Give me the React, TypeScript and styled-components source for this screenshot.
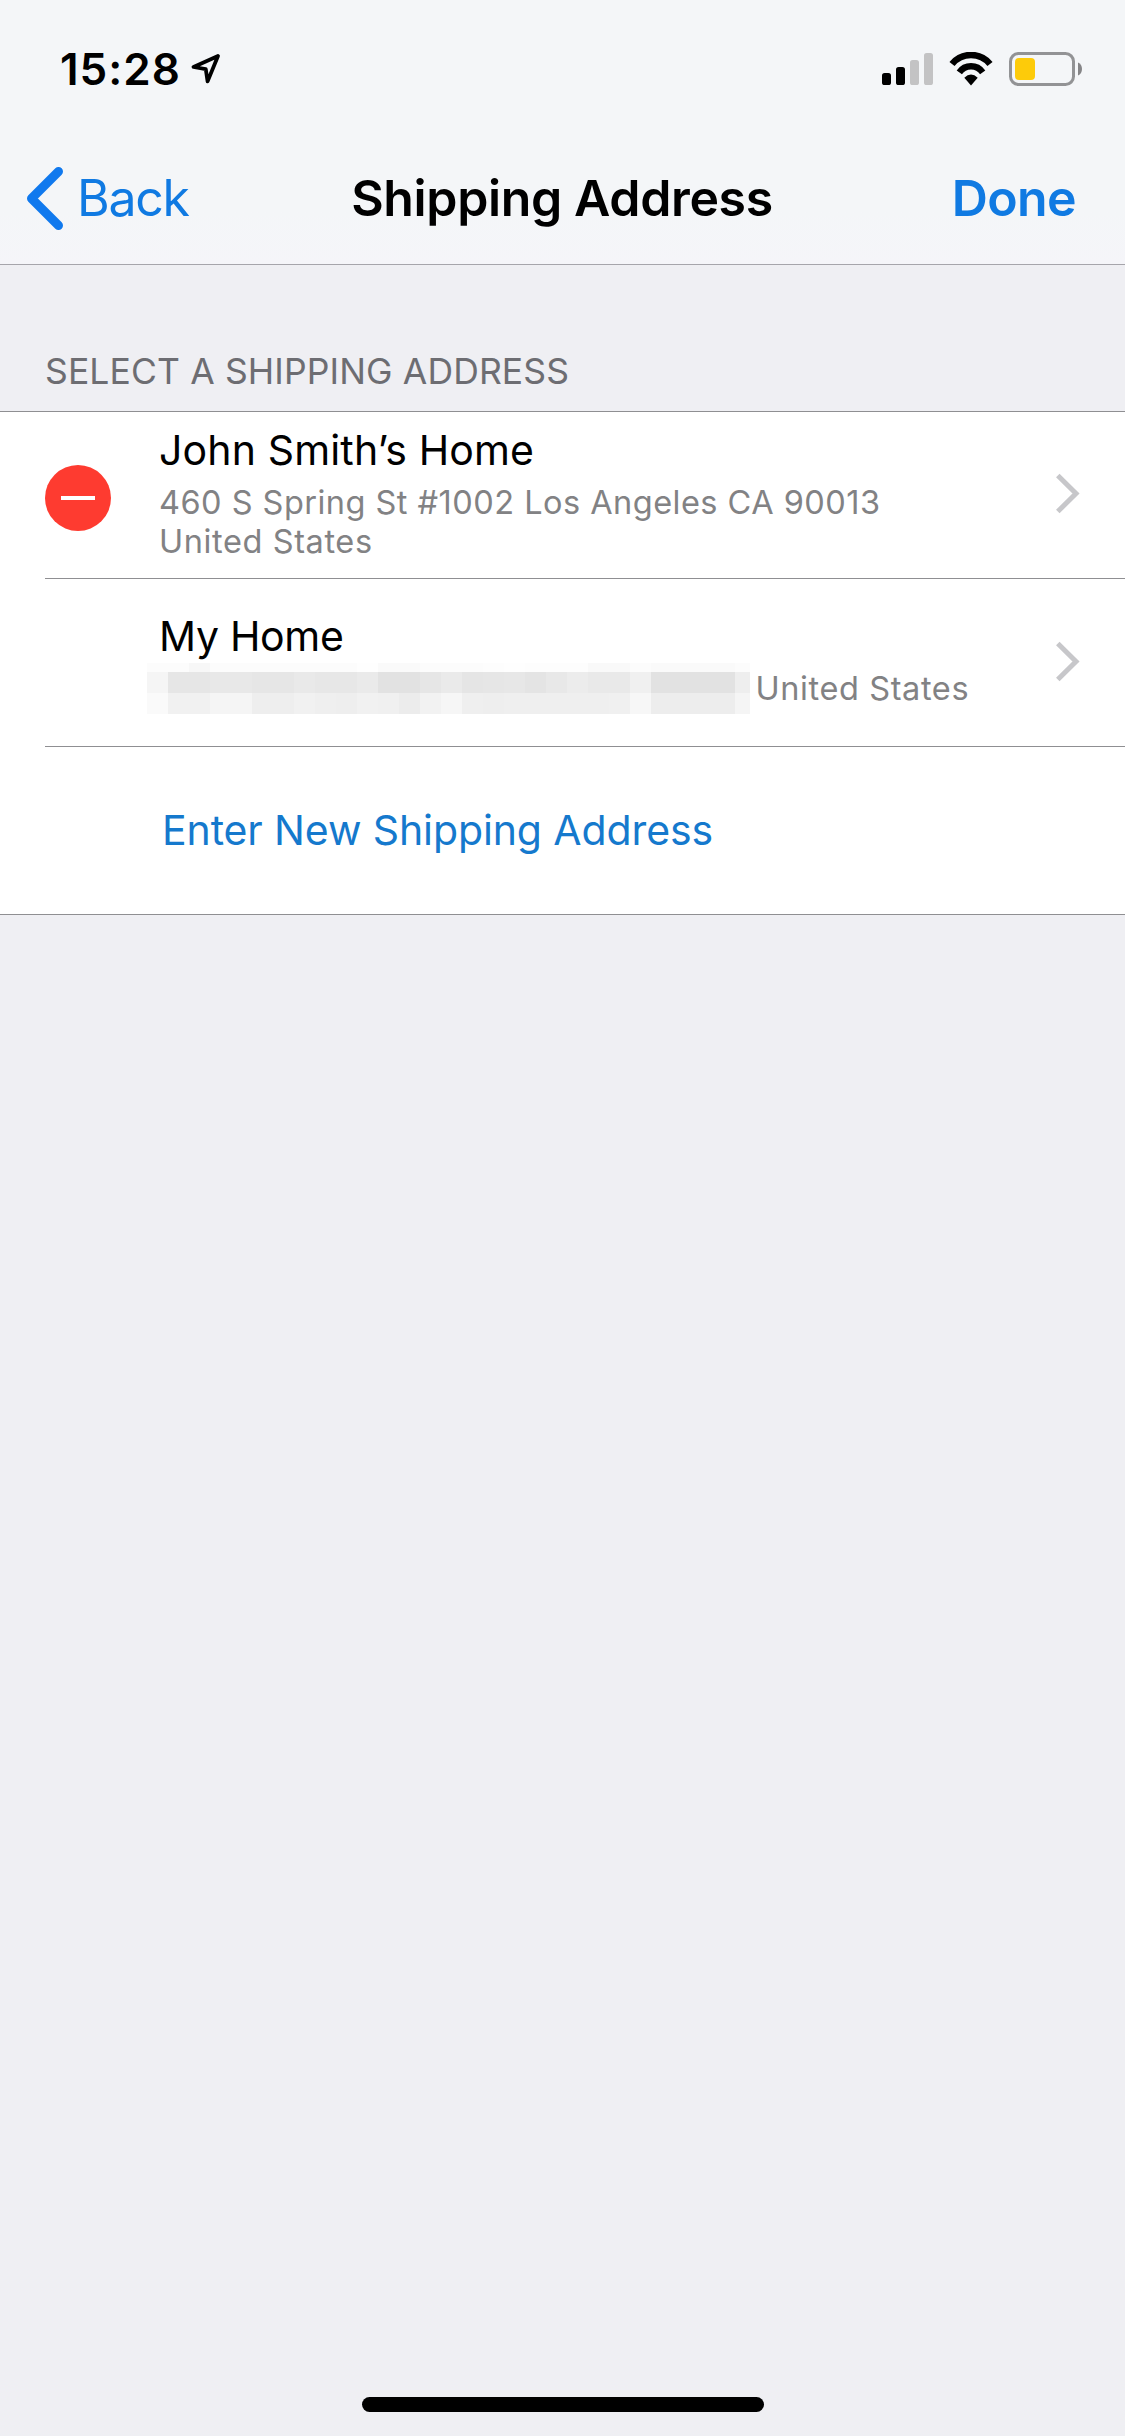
import React from 'react';
import styled, { createGlobalStyle } from 'styled-components';

const GlobalStyle = createGlobalStyle`
  *, *::before, *::after { box-sizing: border-box; }
  body {
    margin: 0;
    background: #efeff3;
    font-family: Inter, "Liberation Sans", sans-serif;
    -webkit-font-smoothing: antialiased;
  }
`;

const Screen = styled.div`
  display: flex;
  flex-direction: column;
  width: 1125px;
  height: 2436px;
  overflow: hidden;
  background: #efeff3;
`;

const TopBar = styled.header`
  background: linear-gradient(#f4f6f8 0%, #f4f6f8 80%, #f5f5f9 100%);
  border-bottom: 1px solid #a6a5ab;
`;

const StatusBar = styled.div`
  display: flex;
  align-items: center;
  height: 132px;
  padding: 6px 42px 0 60px;
`;

const Clock = styled.time`
  width: 130px;
  font-size: 44px;
  font-weight: 600;
  line-height: 54px;
  letter-spacing: 1px;
  color: #000;
`;

const StatusIcons = styled.div`
  display: flex;
  align-items: center;
  gap: 15px;
  margin-left: auto;
`;

const Icon = styled.svg`
  display: block;
  flex: none;
`;

const NavBar = styled.nav`
  display: grid;
  grid-template-columns: 1fr auto 1fr;
  align-items: center;
  height: 132px;
  padding: 0 49px 0 26px;
`;

const NavButton = styled.button<{ $bold?: boolean; $tracking: number }>`
  display: flex;
  align-items: center;
  gap: 13px;
  justify-self: ${(p) => (p.$bold ? 'end' : 'start')};
  padding: 0;
  border: 0;
  background: none;
  font: inherit;
  font-size: 50px;
  font-weight: ${(p) => (p.$bold ? 600 : 400)};
  line-height: 60px;
  letter-spacing: ${(p) => p.$tracking}px;
  color: #107ae2;
`;

const NavTitle = styled.h1`
  margin: 0 0 0 22px;
  font-size: 50px;
  font-weight: 600;
  line-height: 60px;
  letter-spacing: -0.365px;
  white-space: nowrap;
  color: #000;
`;

const SectionHeader = styled.h2`
  display: flex;
  align-items: flex-end;
  height: 146px;
  margin: 0;
  padding: 0 0 19px 45px;
  font-size: 35.5px;
  font-weight: 400;
  line-height: 40px;
  letter-spacing: 0.12px;
  color: #6d6d72;
`;

const AddressList = styled.ul`
  margin: 0;
  padding: 0 0 0 45px;
  list-style: none;
  background: #fff;
  border-top: 1px solid #8f8f92;
  border-bottom: 1px solid #8f8f92;
`;

const Row = styled.li<{ $height: number }>`
  display: flex;
  align-items: center;
  height: ${(p) => p.$height}px;
  padding-right: 45px;

  &:not(:last-child) {
    border-bottom: 1px solid #8f8f92;
  }
`;

const Lead = styled.div`
  flex: none;
  width: 114px;
`;

const RemoveButton = styled.button`
  display: flex;
  align-items: center;
  justify-content: center;
  width: 66px;
  height: 66px;
  margin: 6px 0 0;
  padding: 0;
  border: 0;
  border-radius: 50%;
  background: #fe3b30;

  &::before {
    content: '';
    width: 34px;
    height: 4px;
    background: #fff;
  }
`;

const RowText = styled.div<{ $lift: number }>`
  flex: 1;
  padding-bottom: ${(p) => p.$lift}px;
`;

const RowTitle = styled.div<{ $tracking: number }>`
  margin-bottom: 7px;
  font-size: 41px;
  line-height: 52px;
  letter-spacing: ${(p) => p.$tracking}px;
  color: #000;
`;

const DetailLine = styled.div<{ $tracking: number }>`
  display: flex;
  align-items: center;
  height: 39px;
  font-size: 32.5px;
  line-height: 39px;
  letter-spacing: ${(p) => p.$tracking}px;
  white-space: nowrap;
  color: #828284;
`;

const Mosaic = styled.div`
  display: grid;
  flex: none;
  grid-template-columns: repeat(28, 21px) 15px;
  grid-template-rows: 9px 21px 21px;
  margin: 0 5.5px 0 -12px;
`;

const Tile = styled.span<{ $shade: string }>`
  background: #${(p) => p.$shade.repeat(3)};
`;

const Disclosure = styled(Icon)`
  margin-bottom: 3px;
`;

const AddButton = styled.button`
  padding: 0 0 1px 3px;
  border: 0;
  background: none;
  font: inherit;
  font-size: 41px;
  line-height: 52px;
  letter-spacing: -0.11px;
  color: #1579cd;
`;

const HomeIndicator = styled.div`
  width: 402px;
  height: 15px;
  margin: auto auto 24px 362px;
  border-radius: 8px;
  background: #000;
`;

const SHADES = [
  'fc fc f7 fc fc fc fc fc fc fc fe fa fa fc fc fc fd fe fd fd fd f9 f9 fc fa fa fa fa fc',
  'f5 e6 e6 e8 e8 e6 e6 e9 e7 e7 ea e2 e2 e6 ea e5 e6 e7 e4 e8 ec e9 e9 f0 e2 e2 e2 e2 ee',
  'fa f1 f1 f5 f5 ee ee f1 ef ee f1 f0 ec f2 f6 ef ee ef ef ef ef ef f0 f7 ed ed ed ed f5',
].join(' ').split(' ');

function LocationIcon() {
  return (
    <Icon width="32" height="34" viewBox="0 0 32 34" fill="none" stroke="#000" strokeWidth="3.8" strokeLinejoin="round">
      <path d="M28 4 3.500 15 15.800 17.200 17.600 29.400Z" />
    </Icon>
  );
}

function SignalIcon() {
  return (
    <Icon width="51" height="34" viewBox="0 0 51 34">
      <rect x="0" y="21" width="9" height="12" rx="2.6" fill="#000" />
      <rect x="14" y="15" width="9" height="18" rx="2.6" fill="#000" />
      <rect x="28" y="8" width="9" height="25" rx="2.6" fill="#c3c3c4" />
      <rect x="42" y="1" width="9" height="32" rx="2.6" fill="#c3c3c4" />
    </Icon>
  );
}

function WifiIcon() {
  return (
    <Icon width="46" height="34" viewBox="0 0 46 34" fill="none" stroke="#000">
      <path d="M4 12a24.6 24.6 0 0 1 38 0" strokeWidth="6.6" />
      <path d="M11.3 20.3a14.3 14.3 0 0 1 23.4 0" strokeWidth="6.4" />
      <path d="M16.3 25.8Q23 19.4 29.7 25.8L23 33.4Z" fill="#000" stroke="none" />
    </Icon>
  );
}

function BatteryIcon() {
  return (
    <Icon width="74" height="34" viewBox="0 0 74 34">
      <rect x="1.5" y="1.5" width="63" height="31" rx="8" fill="none" stroke="#929395" strokeWidth="3" />
      <rect x="6" y="6" width="20" height="22" rx="4" fill="#fdcb0a" />
      <path d="M69 10.5c2.6 1.2 4 3.6 4 6.5s-1.400 5.300-4 6.500Z" fill="#858587" />
    </Icon>
  );
}

function BackIcon() {
  return (
    <Icon width="38" height="66" viewBox="0 0 38 66" fill="none" stroke="#1079ee" strokeWidth="9" strokeLinecap="round" strokeLinejoin="round">
      <path d="M32.500 6.500 5.500 33.500 32.500 60.500" />
    </Icon>
  );
}

function DisclosureIcon() {
  return (
    <Disclosure width="25" height="41" viewBox="0 0 25 41" fill="none" stroke="#c7c7ca" strokeWidth="5">
      <path d="M2.800 2.500 21 20.500 2.800 38.500" />
    </Disclosure>
  );
}

export default function App() {
  return (
    <>
      <GlobalStyle />
      <Screen>
        <TopBar>
          <StatusBar>
            <Clock>15:28</Clock>
            <LocationIcon />
            <StatusIcons>
              <SignalIcon />
              <WifiIcon />
              <BatteryIcon />
            </StatusIcons>
          </StatusBar>
          <NavBar>
            <NavButton $tracking={-1.3}>
              <BackIcon />
              Back
            </NavButton>
            <NavTitle>Shipping Address</NavTitle>
            <NavButton $bold $tracking={-0.6}>Done</NavButton>
          </NavBar>
        </TopBar>

        <SectionHeader>SELECT A SHIPPING ADDRESS</SectionHeader>

        <AddressList>
          <Row $height={167}>
            <Lead>
              <RemoveButton aria-label="Remove" />
            </Lead>
            <RowText $lift={5}>
              <RowTitle $tracking={0.15}>John Smith’s Home</RowTitle>
              <DetailLine $tracking={0.47}>460 S Spring St #1002 Los Angeles CA 90013</DetailLine>
              <DetailLine $tracking={0.6}>United States</DetailLine>
            </RowText>
            <DisclosureIcon />
          </Row>
          <Row $height={168}>
            <Lead />
            <RowText $lift={7}>
              <RowTitle $tracking={-0.3}>My Home</RowTitle>
              <DetailLine $tracking={0.6}>
                <Mosaic>
                  {SHADES.map((shade, i) => (
                    <Tile key={i} $shade={shade} />
                  ))}
                </Mosaic>
                United States
              </DetailLine>
            </RowText>
            <DisclosureIcon />
          </Row>
          <Row $height={167}>
            <Lead />
            <AddButton>Enter New Shipping Address</AddButton>
          </Row>
        </AddressList>

        <HomeIndicator />
      </Screen>
    </>
  );
}
